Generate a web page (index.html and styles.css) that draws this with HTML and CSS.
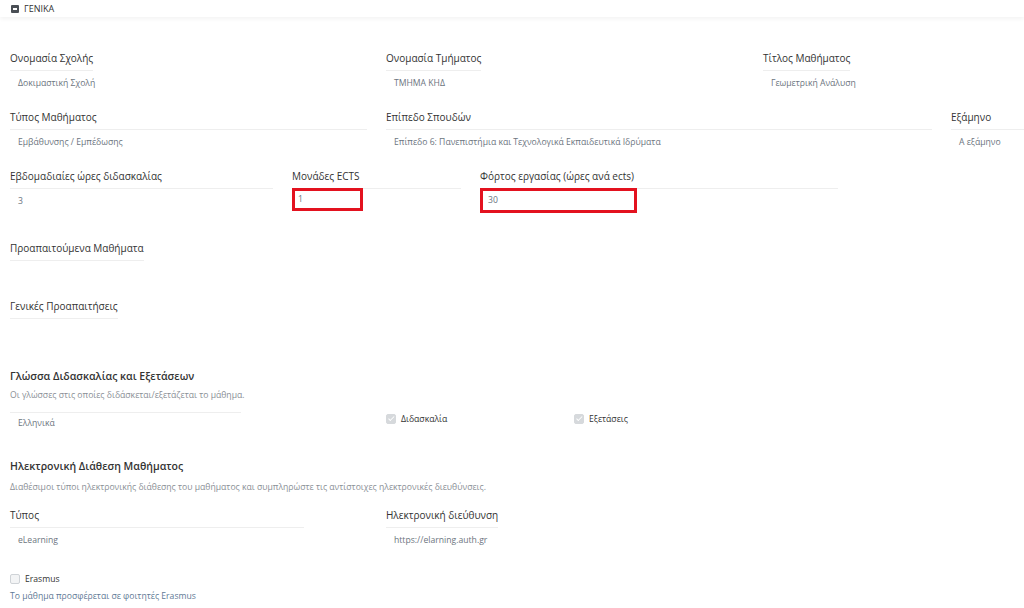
FILE: index.html
```html
<!DOCTYPE html>
<html lang="el">
<head>
  <meta charset="UTF-8">
  <title>Γενικά</title>
  <link rel="stylesheet" href="styles.css">
</head>
<body>
  <!-- Panel header -->
  <div class="panel-head">
    <span class="toggle"></span>
    <span class="panel-title">ΓΕΝΙΚΑ</span>
  </div>

  <div class="panel-body">
    <!-- Row 1 -->
    <div class="row row-first">
      <div class="field w-376">
        <span class="label">Ονομασία Σχολής</span>
        <div class="value">Δοκιμαστική Σχολή</div>
      </div>
      <div class="field w-377">
        <span class="label">Ονομασία Τμήματος</span>
        <div class="value">ΤΜΗΜΑ ΚΗΔ</div>
      </div>
      <div class="field">
        <span class="label">Τίτλος Μαθήματος</span>
        <div class="value">Γεωμετρική Ανάλυση</div>
      </div>
    </div>

    <!-- Row 2 -->
    <div class="row">
      <div class="field w-357 gap">
        <div class="label full">Τύπος Μαθήματος</div>
        <div class="value">Εμβάθυνσης / Εμπέδωσης</div>
      </div>
      <div class="field w-546 gap">
        <div class="label full">Επίπεδο Σπουδών</div>
        <div class="value">Επίπεδο 6: Πανεπιστήμια και Τεχνολογικά Εκπαιδευτικά Ιδρύματα</div>
      </div>
      <div class="field grow">
        <div class="label full">Εξάμηνο</div>
        <div class="value">Α εξάμηνο</div>
      </div>
    </div>

    <!-- Row 3 -->
    <div class="row">
      <div class="field w-263 gap">
        <div class="label full">Εβδομαδιαίες ώρες διδασκαλίας</div>
        <div class="value">3</div>
      </div>
      <div class="field w-169 gap">
        <div class="label full">Μονάδες ECTS</div>
        <div class="value boxed"><span class="mark mark-ects">1</span></div>
      </div>
      <div class="field w-358">
        <div class="label full">Φόρτος εργασίας (ώρες ανά ects)</div>
        <div class="value boxed"><span class="mark mark-load">30</span></div>
      </div>
    </div>

    <div class="row row-prereq">
      <div class="field">
        <span class="label">Προαπαιτούμενα Μαθήματα</span>
      </div>
    </div>

    <div class="row row-general">
      <div class="field">
        <span class="label">Γενικές Προαπαιτήσεις</span>
      </div>
    </div>

    <!-- Languages -->
    <div class="section section-lang">
      <h3 class="section-title">Γλώσσα Διδασκαλίας και Εξετάσεων</h3>
      <p class="section-help">Οι γλώσσες στις οποίες διδάσκεται/εξετάζεται το μάθημα.</p>
      <div class="row lang-row">
        <div class="field w-231 lang-field">
          <div class="label full empty"></div>
          <div class="value">Ελληνικά</div>
        </div>
        <div class="check-cell w-188">
          <span class="check checked"></span>
          <span class="check-label">Διδασκαλία</span>
        </div>
        <div class="check-cell">
          <span class="check checked"></span>
          <span class="check-label">Εξετάσεις</span>
        </div>
      </div>
    </div>

    <!-- Electronic delivery -->
    <div class="section section-online">
      <h3 class="section-title">Ηλεκτρονική Διάθεση Μαθήματος</h3>
      <p class="section-help help-online">Διαθέσιμοι τύποι ηλεκτρονικής διάθεσης του μαθήματος και συμπληρώστε τις αντίστοιχες ηλεκτρονικές διευθύνσεις.</p>
      <div class="row online-row">
        <div class="field w-294 gap-82">
          <div class="label full">Τύπος</div>
          <div class="value">eLearning</div>
        </div>
        <div class="field">
          <span class="label">Ηλεκτρονική διεύθυνση</span>
          <div class="value">https://elarning.auth.gr</div>
        </div>
      </div>
    </div>

    <!-- Erasmus -->
    <div class="erasmus">
      <div class="erasmus-check">
        <span class="check"></span>
        <span class="erasmus-label">Erasmus</span>
      </div>
      <p class="erasmus-help">Το μάθημα προσφέρεται σε φοιτητές Erasmus</p>
    </div>
  </div>
</body>
</html>
```

FILE: styles.css
```css
/* Base */
body {
  margin: 0;
  font-family: "Open Sans", "Noto Sans", Arial, sans-serif;
  background-color: #ffffff;
  color: #333333;
  overflow: hidden;
}

/* Panel header */
.panel-head {
  height: 17px;
  display: flex;
  align-items: center;
  padding-left: 11px;
  box-shadow: 0 2px 4px rgba(0, 0, 0, 0.05);
}

.toggle {
  width: 8px;
  height: 8px;
  background-color: #4a4f55;
  border-radius: 1px;
  position: relative;
  margin-right: 5px;
}

.toggle::after {
  content: "";
  position: absolute;
  left: 2px;
  right: 2px;
  top: 3px;
  height: 2px;
  background-color: #ffffff;
}

.panel-title {
  font-size: 9px;
  color: #333333;
}

.panel-body {
  padding-left: 10px;
}

/* Rows and fields */
.row {
  display: flex;
  margin-top: 19px;
}

.row-first {
  margin-top: 33px;
}

.field {
  display: flex;
  flex-direction: column;
  align-items: flex-start;
}

.field .label {
  font-size: 10px;
  line-height: 17px;
  padding-bottom: 3px;
  border-bottom: 1px solid #eeeeee;
  color: #333333;
}

.field .label.full {
  align-self: stretch;
}

.value {
  font-size: 8.65px;
  line-height: 14px;
  padding: 5px 0 0 8px;
  color: #6c7580;
  height: 14px;
}

.grow { flex: 1; }
.gap { margin-right: 19px; }
.gap-82 { margin-right: 82px; }

.w-376 { width: 376px; }
.w-377 { width: 377px; }
.w-357 { width: 357px; }
.w-546 { width: 546px; }
.w-263 { width: 263px; }
.w-169 { width: 169px; }
.w-358 { width: 358px; }
.w-231 { width: 231px; }
.w-188 { width: 188px; }
.w-294 { width: 294px; }

/* Red highlight boxes */
.value.boxed {
  padding-left: 0;
}

.mark {
  display: block;
  border: 3px solid #e3121f;
  margin-top: -6px;
}

.mark-ects {
  width: 62px;
  height: 17px;
  line-height: 17px;
  padding-left: 3px;
}

.mark-load {
  width: 146px;
  height: 19px;
  line-height: 19px;
  padding-left: 5px;
}

.row-prereq {
  margin-top: 32px;
}

.row-general {
  margin-top: 37px;
}

/* Sections */
.section-title {
  margin: 0;
  font-size: 10.5px;
  font-weight: 600;
  line-height: 17px;
  color: #333333;
}

.section-help {
  margin: 2.5px 0 0;
  font-size: 8.65px;
  line-height: 14px;
  color: #8a8f96;
}

.section-lang {
  margin-top: 49px;
}

.lang-row {
  margin-top: 10px;
  align-items: flex-start;
}

.lang-field {
  margin-right: 145px;
}

.label.empty {
  height: 0;
  padding: 0;
}

.lang-field .value {
  padding-top: 3px;
}

.check-cell {
  display: flex;
  align-items: center;
  height: 14px;
}

.check {
  width: 8px;
  height: 8px;
  border: 1px solid #cfd3d7;
  border-radius: 2px;
  background-color: #f3f4f5;
  margin-right: 5px;
  position: relative;
}

.check.checked {
  background-color: #d6d9dc;
  border-color: #d6d9dc;
}

.check.checked::after {
  content: "";
  position: absolute;
  left: 2.5px;
  top: 0.5px;
  width: 2px;
  height: 4.5px;
  border: solid #ffffff;
  border-width: 0 1.3px 1.3px 0;
  transform: rotate(45deg);
}

.check-label {
  font-size: 8.65px;
  color: #333333;
}

.section-online {
  margin-top: 28.5px;
}

.help-online {
  margin-top: 4.5px;
}

.online-row {
  margin-top: 13.5px;
}

/* Erasmus */
.erasmus {
  margin-top: 24.5px;
}

.erasmus-check {
  display: flex;
  align-items: center;
  height: 14px;
}

.erasmus-label {
  font-size: 8.65px;
  color: #333333;
}

.erasmus-help {
  margin: 3px 0 0;
  font-size: 8.65px;
  line-height: 14px;
  color: #5f7a96;
}
```
